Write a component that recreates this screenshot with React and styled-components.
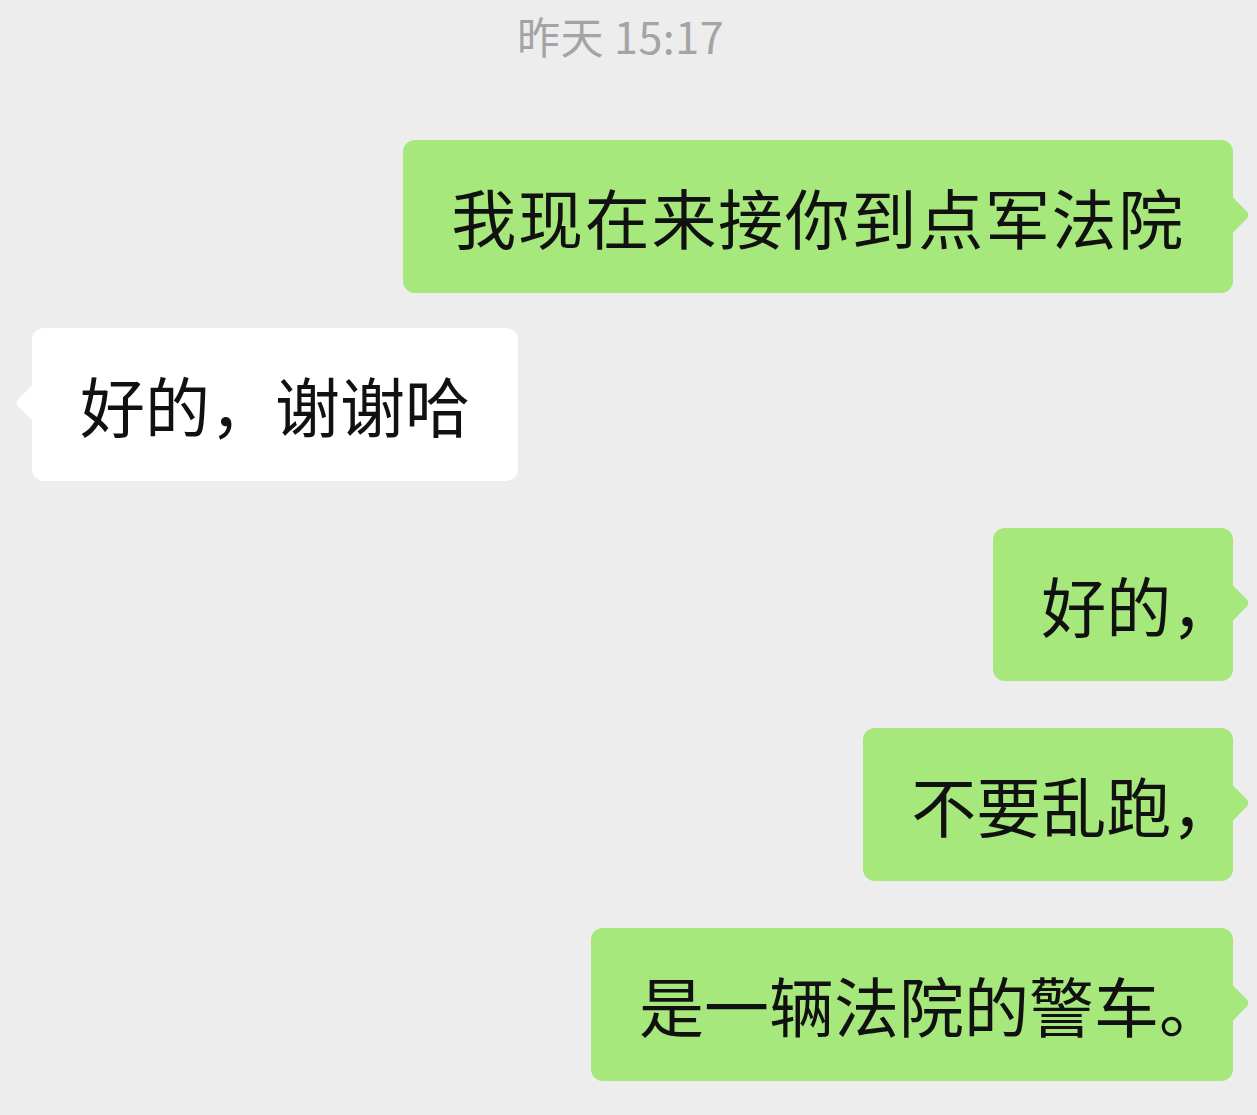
import React from 'react';
import styled, { createGlobalStyle, css } from 'styled-components';

const GlobalStyle = createGlobalStyle`
  html, body {
    margin: 0;
    padding: 0;
    background: #ededed;
  }
  body {
    font-family: "Noto Sans CJK SC", "Noto Sans", sans-serif;
  }
`;

const Screen = styled.div`
  width: 1257px;
  height: 1115px;
  overflow: hidden;
  background: #ededed;
  display: flex;
  flex-direction: column;
  padding: 9px 24px 0 32px;
  box-sizing: border-box;
`;

const Time = styled.div`
  align-self: center;
  margin-right: 24px;
  font-size: 43px;
  line-height: 52px;
  color: #a4a4a4;
  letter-spacing: 0.5px;
  margin-bottom: 79px;
`;

const Row = styled.div`
  display: flex;
  justify-content: ${p => (p.$mine ? 'flex-end' : 'flex-start')};
  margin-bottom: ${p => p.$gap}px;
`;

const Bubble = styled.div`
  position: relative;
  padding: 34px 48px;
  border-radius: 12px;
  font-size: 65px;
  line-height: 85px;
  letter-spacing: ${p => p.$spacing || 0}px;
  color: #111;
  white-space: nowrap;
  background: ${p => (p.$mine ? '#a6e87b' : '#ffffff')};

  &::after {
    content: '';
    position: absolute;
    top: 62px;
    width: 26px;
    height: 26px;
    background: inherit;
    transform: rotate(45deg);
    ${p =>
      p.$mine
        ? css`
            right: -12px;
            border-radius: 0 5px 0 0;
          `
        : css`
            left: -12px;
            border-radius: 0 0 0 5px;
          `}
  }
`;

const Comma = styled.span`
  letter-spacing: -0.79em;
`;

const Stop = styled.span`
  letter-spacing: -0.6em;
`;

const messages = [
  { mine: true, gap: 35, spacing: 1.7, text: '我现在来接你到点军法院' },
  { mine: false, gap: 47, text: '好的，谢谢哈' },
  { mine: true, gap: 47, text: '好的', tail: 'comma' },
  { mine: true, gap: 47, text: '不要乱跑', tail: 'comma' },
  { mine: true, gap: 0, text: '是一辆法院的警车', tail: 'stop' },
];

export default function App() {
  return (
    <>
      <GlobalStyle />
      <Screen>
        <Time>昨天 15:17</Time>
        {messages.map((m, i) => (
          <Row key={i} $mine={m.mine} $gap={m.gap}>
            <Bubble $mine={m.mine} $spacing={m.spacing}>
              {m.text}
              {m.tail === 'comma' && <Comma>，</Comma>}
              {m.tail === 'stop' && <Stop>。</Stop>}
            </Bubble>
          </Row>
        ))}
      </Screen>
    </>
  );
}
